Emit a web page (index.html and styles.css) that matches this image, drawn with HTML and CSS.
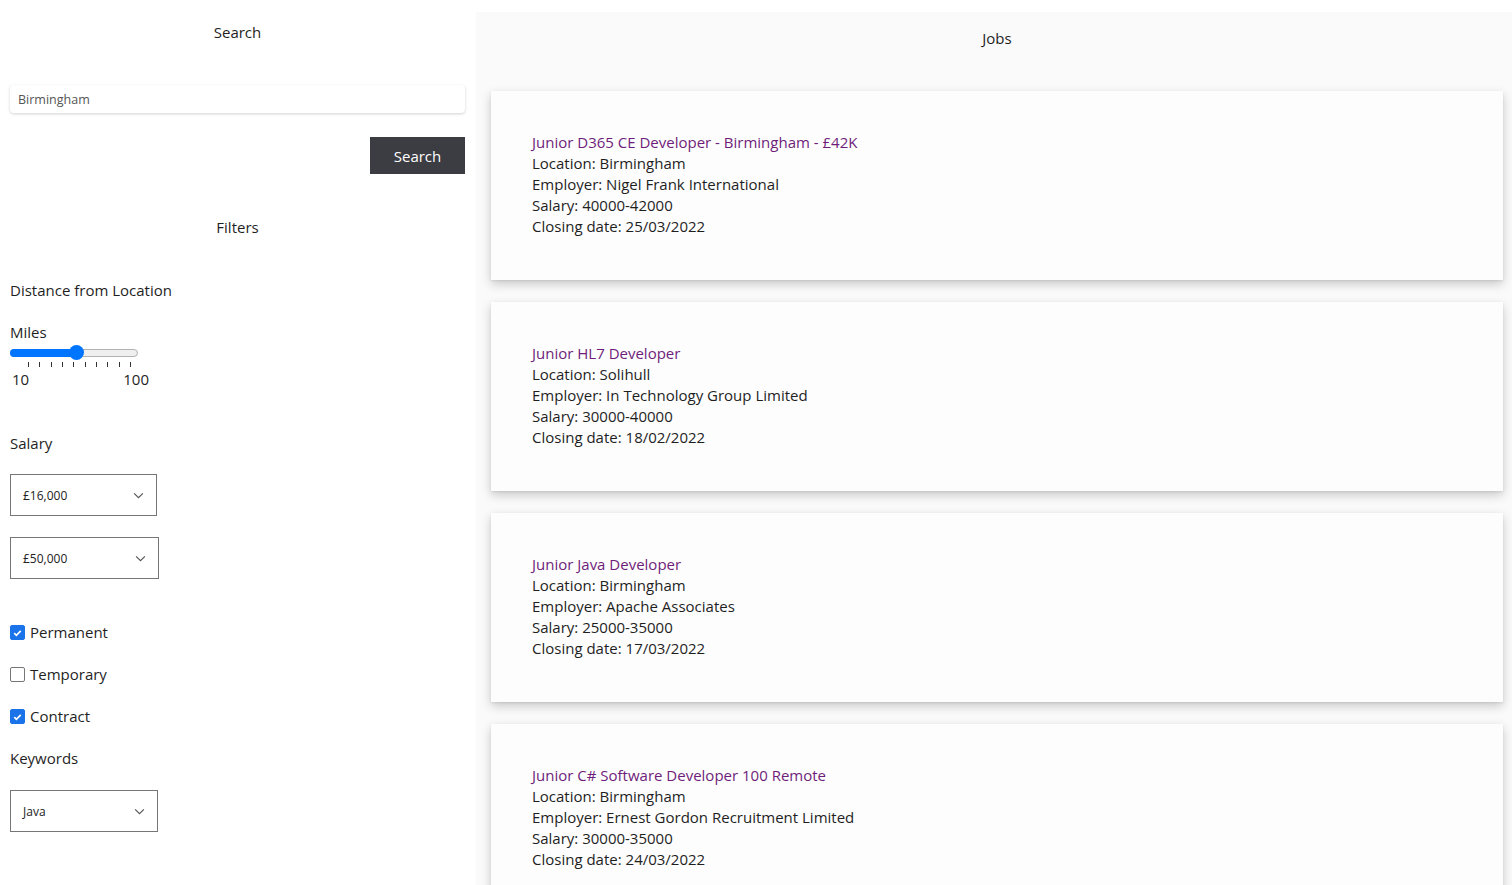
FILE: index.html
```html
<!DOCTYPE html>
<html lang="en">
<head>
<meta charset="utf-8">
<title>Jobs</title>
<link rel="stylesheet" href="styles.css">
</head>
<body>
<div class="page">
  <aside class="sidebar">
    <h2 class="side-title">Search</h2>
    <input class="search-input" type="text" value="Birmingham">
    <div class="btn-row"><button class="search-btn">Search</button></div>
    <h2 class="filters-title">Filters</h2>

    <div class="label distance">Distance from Location</div>
    <div class="label miles">Miles</div>
    <div class="slider">
      <div class="track"><div class="fill"></div><div class="thumb"></div></div>
      <div class="ticks"><span></span><span></span><span></span><span></span><span></span><span></span><span></span><span></span><span></span><span></span></div>
      <div class="range-labels"><span>10</span><span>100</span></div>
    </div>

    <div class="label salary">Salary</div>
    <div class="select s1"><span>£16,000</span><svg viewBox="0 0 12 8" width="11" height="7"><path d="M1 1.5l5 5 5-5" fill="none" stroke="#555" stroke-width="1.3"/></svg></div>
    <div class="select s2"><span>£50,000</span><svg viewBox="0 0 12 8" width="11" height="7"><path d="M1 1.5l5 5 5-5" fill="none" stroke="#555" stroke-width="1.3"/></svg></div>

    <div class="checks">
      <label class="check"><span class="box on"><svg viewBox="0 0 14 14" width="14" height="14"><path d="M3.5 7.2l2.3 2.3 4.7-4.8" fill="none" stroke="#fff" stroke-width="1.8"/></svg></span>Permanent</label>
      <label class="check"><span class="box"></span>Temporary</label>
      <label class="check"><span class="box on"><svg viewBox="0 0 14 14" width="14" height="14"><path d="M3.5 7.2l2.3 2.3 4.7-4.8" fill="none" stroke="#fff" stroke-width="1.8"/></svg></span>Contract</label>
    </div>

    <div class="label keywords">Keywords</div>
    <div class="select s3"><span>Java</span><svg viewBox="0 0 12 8" width="11" height="7"><path d="M1 1.5l5 5 5-5" fill="none" stroke="#555" stroke-width="1.3"/></svg></div>
  </aside>

  <main class="jobs">
    <h2 class="jobs-title">Jobs</h2>
    <div class="cards">
      <article class="card">
        <a class="job-title" href="#">Junior D365 CE Developer - Birmingham - £42K</a>
        <div>Location: Birmingham</div>
        <div>Employer: Nigel Frank International</div>
        <div>Salary: 40000-42000</div>
        <div>Closing date: 25/03/2022</div>
      </article>
      <article class="card">
        <a class="job-title" href="#">Junior HL7 Developer</a>
        <div>Location: Solihull</div>
        <div>Employer: In Technology Group Limited</div>
        <div>Salary: 30000-40000</div>
        <div>Closing date: 18/02/2022</div>
      </article>
      <article class="card">
        <a class="job-title" href="#">Junior Java Developer</a>
        <div>Location: Birmingham</div>
        <div>Employer: Apache Associates</div>
        <div>Salary: 25000-35000</div>
        <div>Closing date: 17/03/2022</div>
      </article>
      <article class="card">
        <a class="job-title" href="#">Junior C# Software Developer 100 Remote</a>
        <div>Location: Birmingham</div>
        <div>Employer: Ernest Gordon Recruitment Limited</div>
        <div>Salary: 30000-35000</div>
        <div>Closing date: 24/03/2022</div>
      </article>
    </div>
  </main>
</div>
</body>
</html>
```

FILE: styles.css
```css
* { box-sizing: border-box; }
html, body { margin: 0; padding: 0; }
body {
  font-family: "Open Sans", "Noto Sans", sans-serif;
  font-size: 15px;
  line-height: 21px;
  color: #1f1f1f;
  background: #fff;
  overflow: hidden;
  height: 885px;
}
.page {
  display: flex;
  align-items: flex-start;
}
.sidebar {
  width: 476px;
  flex: none;
  padding: 0 11px 0 10px;
  display: flex;
  flex-direction: column;
}
.side-title, .filters-title, .jobs-title {
  font-size: 15px;
  font-weight: 400;
  text-align: center;
  margin: 0;
}
.side-title { margin-top: 22px; }
.search-input {
  margin-top: 42px;
  height: 28px;
  width: 100%;
  border: none;
  border-radius: 4px;
  box-shadow: 0 1px 3px rgba(0,0,0,0.18);
  padding: 0 8px;
  font-family: inherit;
  font-size: 12.5px;
  color: #555;
  background: #fff;
  outline: none;
}
.btn-row { display: flex; justify-content: flex-end; margin-top: 24px; }
.search-btn {
  width: 95px;
  height: 37px;
  background: #3c3c43;
  color: #fff;
  border: none;
  font-family: inherit;
  font-size: 15px;
}
.filters-title { margin-top: 43px; }
.label { font-size: 15px; }
.distance { margin-top: 42px; }
.miles { margin-top: 21px; }
.slider { width: 140px; margin-top: 6px; }
.track {
  position: relative;
  height: 8px;
  border-radius: 4px;
  background: #efefef;
  border: 1px solid #b2b2b2;
  width: 128px;
}
.fill {
  position: absolute;
  left: -1px; top: -1px; bottom: -1px;
  width: 66px;
  background: #0075ff;
  border-radius: 4px;
}
.thumb {
  position: absolute;
  left: 58px; top: -5px;
  width: 15px; height: 15px;
  border-radius: 50%;
  background: #0075ff;
}
.ticks {
  display: flex;
  justify-content: space-between;
  width: 103px;
  margin-left: 18px;
  margin-top: 5px;
  height: 6px;
}
.ticks span { width: 1px; height: 5px; background: #333; }
.range-labels {
  display: flex;
  justify-content: space-between;
  width: 139px;
  padding-left: 2px;
  font-size: 15px;
  margin-top: 1px;
}
.salary { margin-top: 43px; }
.select {
  margin-top: 20px;
  height: 42px;
  width: 147px;
  border: 1px solid #767676;
  display: flex;
  align-items: center;
  justify-content: space-between;
  padding: 0 12px 0 12px;
  font-size: 12px;
  color: #222;
}
.select.s2 { width: 149px; margin-top: 21px; }
.select.s3 { width: 148px; margin-top: 21px; }
.checks { margin-top: 43px; display: flex; flex-direction: column; gap: 21px; }
.check { display: flex; align-items: center; gap: 5px; height: 21px; font-size: 15px; }
.box {
  width: 15px; height: 15px;
  border: 1px solid #767676;
  border-radius: 2px;
  display: flex; align-items: center; justify-content: center;
  background: #fff;
}
.box.on { background: #1a73e8; border-color: #1a73e8; }
.keywords { margin-top: 21px; }

.jobs {
  flex: 1;
  margin-top: 12px;
  background: #fafafa;
  min-height: 873px;
  padding: 16px 9px 0 15px;
}
.jobs-title { line-height: 21px; }
.cards {
  margin-top: 42px;
  display: flex;
  flex-direction: column;
  gap: 22px;
}
.card {
  background: #fdfdfd;
  height: 189px;
  padding: 41px 40px 0 41px;
  box-shadow: 0 4px 10px rgba(0,0,0,0.2), 0 1px 2px rgba(0,0,0,0.08);
  font-size: 15px;
  line-height: 21px;
  display: flex;
  flex-direction: column;
  align-items: flex-start;
}
.job-title { color: #6f1d7a; text-decoration: none; }
```
